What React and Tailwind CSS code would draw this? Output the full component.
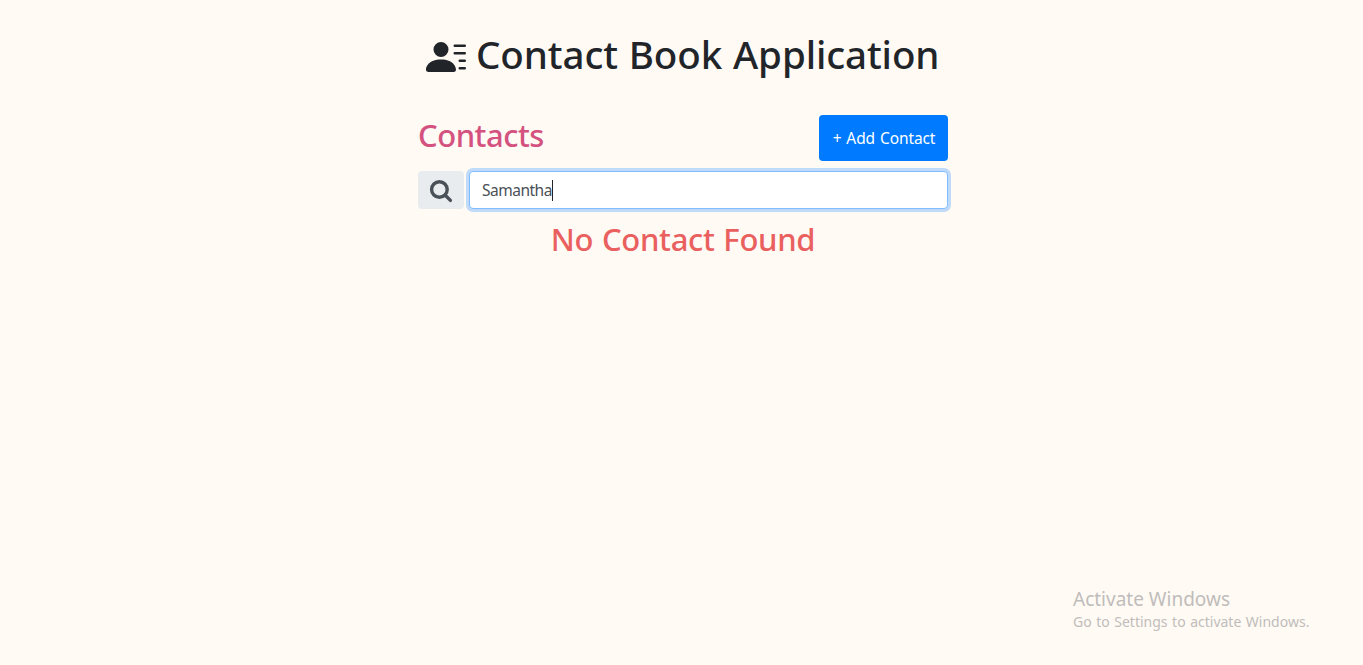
import { BsPersonLinesFill } from "react-icons/bs";

function SearchIcon() {
  return (
    <svg viewBox="0 0 24 24" className="size-6" fill="none" stroke="currentColor">
      <circle cx="10.4" cy="10.5" r="7.8" strokeWidth="3.4" />
      <path d="M16 16l5.4 5.4" strokeWidth="3.4" strokeLinecap="round" />
    </svg>
  );
}

export default function App() {
  return (
    <div className="flex h-[665px] w-full flex-col overflow-hidden bg-[#fffaf4] font-['Noto_Sans',sans-serif] text-[#212529]">
      <main className="ml-[418px] flex w-[530px] flex-col">
        <h1 className="mt-[31px] flex h-12 items-center pl-2 text-[38.5px] leading-[48px] font-medium tracking-[-0.1px] whitespace-nowrap">
          <BsPersonLinesFill className="mt-[3px] mr-[10px] size-10 shrink-0" />
          <span className="pb-[2px] [word-spacing:1px]">Contact Book Application</span>
        </h1>
        <div className="mt-9 flex h-[46px] items-start justify-between">
          <h2 className="-mt-px text-[31px] leading-[42px] font-medium tracking-[-0.5px] text-[#d4527f]">Contacts</h2>
          <button className="h-[46px] w-[129px] rounded bg-[#007bff] pt-px pl-px text-[15.5px] tracking-[-0.1px] whitespace-nowrap text-white [word-spacing:1px]">
            + Add Contact
          </button>
        </div>
        <div className="mt-[10px] flex h-[38px] gap-[5px]">
          <span className="flex w-[46px] items-center justify-center rounded bg-[#e9ecef] pt-[2px] text-[#495057]">
            <SearchIcon />
          </span>
          <div className="flex flex-1 items-center rounded border border-[#80bdff] bg-white pl-3 text-[15.5px] tracking-[-0.5px] text-[#495057] shadow-[0_0_0_3px_#bfdbf9]">
            <span className="pt-[2px]">Samantha</span>
            <span className="h-[21px] w-px bg-[#212529]" />
          </div>
        </div>
        <h2 className="mt-[11px] text-center text-[31px] leading-[38px] font-medium tracking-[-0.3px] text-[#e9605f] [word-spacing:1px]">
          No Contact Found
        </h2>
      </main>
      <aside className="mt-auto mb-[33px] ml-[1073px] whitespace-nowrap text-[#bfbdbb]">
        <p className="text-[19px] leading-[26px]">Activate Windows</p>
        <p className="text-[14px] leading-5 [word-spacing:0.9px]">Go to Settings to activate Windows.</p>
      </aside>
    </div>
  );
}
